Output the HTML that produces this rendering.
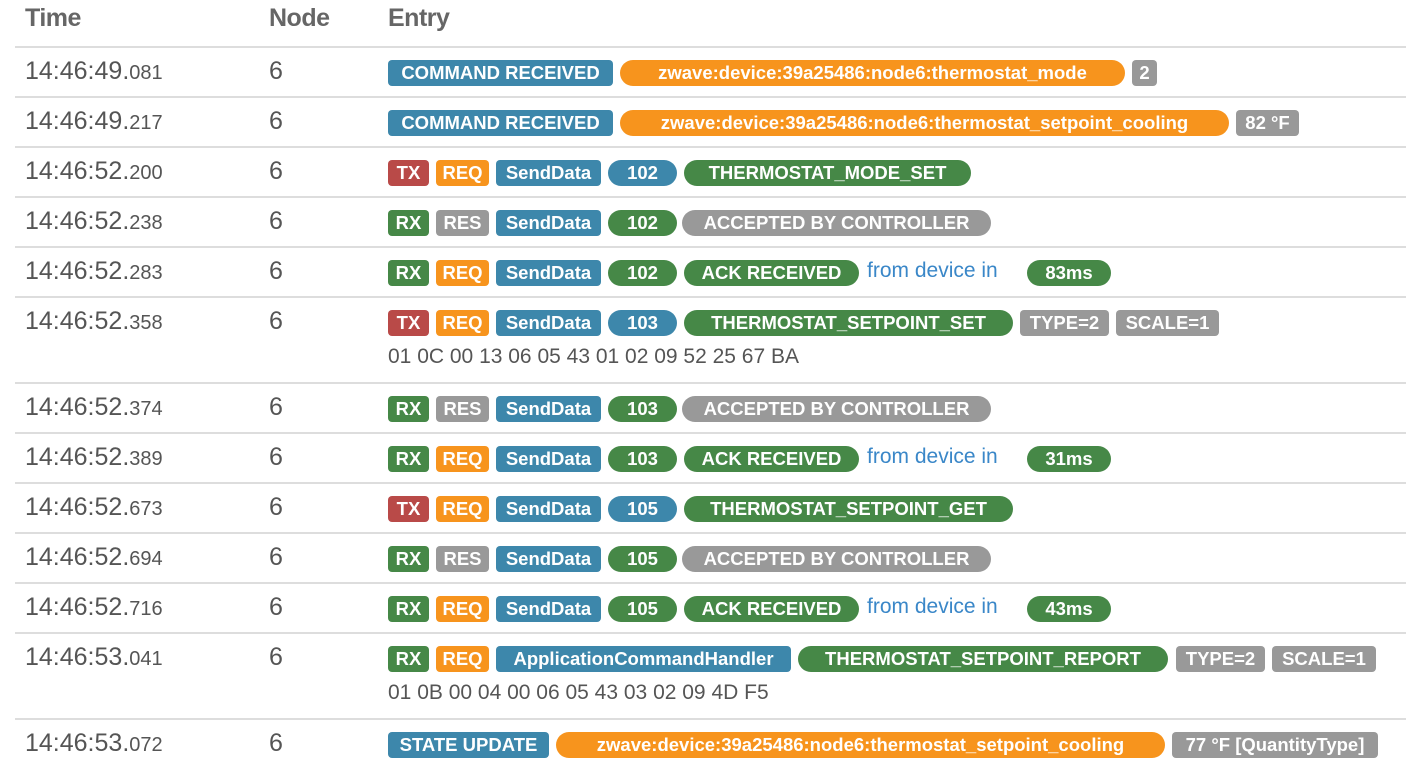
<!DOCTYPE html>
<html><head><meta charset="utf-8"><style>
body{margin:0;background:#fff;width:1406px;height:778px;overflow:hidden;position:relative;font-family:"Liberation Sans",sans-serif;}
.h{position:absolute;top:4px;font:bold 25px "Liberation Sans",sans-serif;color:#666;letter-spacing:-0.5px}
.l{position:absolute;left:15px;right:0;height:2px;background:#ddd;}
.t{position:absolute;left:25px;font-size:25px;color:#555;}
.t small{font-size:20px;}
.n{position:absolute;left:269px;font-size:25px;color:#555;}
.b{position:absolute;height:26px;line-height:26px;text-align:center;color:#fff;font-weight:bold;font-size:18.5px;border-radius:4px;white-space:nowrap;overflow:hidden;}
.p{border-radius:13px;}
.bl{background:#3d87ab}.or{background:#f7941d}.rd{background:#b94a48}.gr{background:#468847}.gy{background:#999}
.f{position:absolute;color:#3a87c8;font-size:21px;}
.x{position:absolute;left:388px;color:#555;font-size:21px;}
</style></head><body>
<div class="h" style="left:25px">Time</div><div class="h" style="left:269px">Node</div><div class="h" style="left:388px">Entry</div>
<div class="l" style="top:46px"></div><div class="l" style="top:96px"></div><div class="l" style="top:146px"></div><div class="l" style="top:196px"></div><div class="l" style="top:246px"></div><div class="l" style="top:296px"></div><div class="l" style="top:382px"></div><div class="l" style="top:432px"></div><div class="l" style="top:482px"></div><div class="l" style="top:532px"></div><div class="l" style="top:582px"></div><div class="l" style="top:632px"></div><div class="l" style="top:718px"></div>

<div class="t" style="top:57px">14:46:49.<small>081</small></div><div class="n" style="top:57px">6</div>
<div class="b bl" style="top:60px;left:388px;width:225px">COMMAND RECEIVED</div>
<div class="b or p" style="top:60px;left:620px;width:505px">zwave:device:39a25486:node6:thermostat_mode</div>
<div class="b gy" style="top:60px;left:1132px;width:25px">2</div>

<div class="t" style="top:107px">14:46:49.<small>217</small></div><div class="n" style="top:107px">6</div>
<div class="b bl" style="top:110px;left:388px;width:225px">COMMAND RECEIVED</div>
<div class="b or p" style="top:110px;left:620px;width:609px">zwave:device:39a25486:node6:thermostat_setpoint_cooling</div>
<div class="b gy" style="top:110px;left:1236px;width:63px">82 °F</div>

<div class="t" style="top:157px">14:46:52.<small>200</small></div><div class="n" style="top:157px">6</div>
<div class="b rd" style="top:160px;left:388px;width:41px">TX</div><div class="b or" style="top:160px;left:436px;width:53px">REQ</div><div class="b bl" style="top:160px;left:496px;width:105px">SendData</div><div class="b bl p" style="top:160px;left:608px;width:69px">102</div>
<div class="b gr p" style="top:160px;left:684px;width:287px">THERMOSTAT_MODE_SET</div>

<div class="t" style="top:207px">14:46:52.<small>238</small></div><div class="n" style="top:207px">6</div>
<div class="b gr" style="top:210px;left:388px;width:41px">RX</div><div class="b gy" style="top:210px;left:436px;width:53px">RES</div><div class="b bl" style="top:210px;left:496px;width:105px">SendData</div><div class="b gr p" style="top:210px;left:608px;width:69px">102</div>
<div class="b gy p" style="top:210px;left:682px;width:309px">ACCEPTED BY CONTROLLER</div>

<div class="t" style="top:257px">14:46:52.<small>283</small></div><div class="n" style="top:257px">6</div>
<div class="b gr" style="top:260px;left:388px;width:41px">RX</div><div class="b or" style="top:260px;left:436px;width:53px">REQ</div><div class="b bl" style="top:260px;left:496px;width:105px">SendData</div><div class="b gr p" style="top:260px;left:608px;width:69px">102</div>
<div class="b gr p" style="top:260px;left:684px;width:175px">ACK RECEIVED</div><div class="f" style="top:259px;left:867px">from device in</div><div class="b gr p" style="top:260px;left:1027px;width:84px">83ms</div>

<div class="t" style="top:307px">14:46:52.<small>358</small></div><div class="n" style="top:307px">6</div>
<div class="b rd" style="top:310px;left:388px;width:41px">TX</div><div class="b or" style="top:310px;left:436px;width:53px">REQ</div><div class="b bl" style="top:310px;left:496px;width:105px">SendData</div><div class="b bl p" style="top:310px;left:608px;width:69px">103</div>
<div class="b gr p" style="top:310px;left:684px;width:329px">THERMOSTAT_SETPOINT_SET</div><div class="b gy" style="top:310px;left:1020px;width:89px">TYPE=2</div><div class="b gy" style="top:310px;left:1116px;width:103px">SCALE=1</div>
<div class="x" style="top:345px">01 0C 00 13 06 05 43 01 02 09 52 25 67 BA</div>

<div class="t" style="top:393px">14:46:52.<small>374</small></div><div class="n" style="top:393px">6</div>
<div class="b gr" style="top:396px;left:388px;width:41px">RX</div><div class="b gy" style="top:396px;left:436px;width:53px">RES</div><div class="b bl" style="top:396px;left:496px;width:105px">SendData</div><div class="b gr p" style="top:396px;left:608px;width:69px">103</div>
<div class="b gy p" style="top:396px;left:682px;width:309px">ACCEPTED BY CONTROLLER</div>

<div class="t" style="top:443px">14:46:52.<small>389</small></div><div class="n" style="top:443px">6</div>
<div class="b gr" style="top:446px;left:388px;width:41px">RX</div><div class="b or" style="top:446px;left:436px;width:53px">REQ</div><div class="b bl" style="top:446px;left:496px;width:105px">SendData</div><div class="b gr p" style="top:446px;left:608px;width:69px">103</div>
<div class="b gr p" style="top:446px;left:684px;width:175px">ACK RECEIVED</div><div class="f" style="top:445px;left:867px">from device in</div><div class="b gr p" style="top:446px;left:1027px;width:84px">31ms</div>

<div class="t" style="top:493px">14:46:52.<small>673</small></div><div class="n" style="top:493px">6</div>
<div class="b rd" style="top:496px;left:388px;width:41px">TX</div><div class="b or" style="top:496px;left:436px;width:53px">REQ</div><div class="b bl" style="top:496px;left:496px;width:105px">SendData</div><div class="b bl p" style="top:496px;left:608px;width:69px">105</div>
<div class="b gr p" style="top:496px;left:684px;width:329px">THERMOSTAT_SETPOINT_GET</div>

<div class="t" style="top:543px">14:46:52.<small>694</small></div><div class="n" style="top:543px">6</div>
<div class="b gr" style="top:546px;left:388px;width:41px">RX</div><div class="b gy" style="top:546px;left:436px;width:53px">RES</div><div class="b bl" style="top:546px;left:496px;width:105px">SendData</div><div class="b gr p" style="top:546px;left:608px;width:69px">105</div>
<div class="b gy p" style="top:546px;left:682px;width:309px">ACCEPTED BY CONTROLLER</div>

<div class="t" style="top:593px">14:46:52.<small>716</small></div><div class="n" style="top:593px">6</div>
<div class="b gr" style="top:596px;left:388px;width:41px">RX</div><div class="b or" style="top:596px;left:436px;width:53px">REQ</div><div class="b bl" style="top:596px;left:496px;width:105px">SendData</div><div class="b gr p" style="top:596px;left:608px;width:69px">105</div>
<div class="b gr p" style="top:596px;left:684px;width:175px">ACK RECEIVED</div><div class="f" style="top:595px;left:867px">from device in</div><div class="b gr p" style="top:596px;left:1027px;width:84px">43ms</div>

<div class="t" style="top:643px">14:46:53.<small>041</small></div><div class="n" style="top:643px">6</div>
<div class="b gr" style="top:646px;left:388px;width:41px">RX</div><div class="b or" style="top:646px;left:436px;width:53px">REQ</div><div class="b bl" style="top:646px;left:496px;width:295px">ApplicationCommandHandler</div>
<div class="b gr p" style="top:646px;left:798px;width:370px">THERMOSTAT_SETPOINT_REPORT</div><div class="b gy" style="top:646px;left:1176px;width:89px">TYPE=2</div><div class="b gy" style="top:646px;left:1272px;width:104px">SCALE=1</div>
<div class="x" style="top:681px">01 0B 00 04 00 06 05 43 03 02 09 4D F5</div>

<div class="t" style="top:729px">14:46:53.<small>072</small></div><div class="n" style="top:729px">6</div>
<div class="b bl" style="top:732px;left:388px;width:161px">STATE UPDATE</div>
<div class="b or p" style="top:732px;left:556px;width:609px">zwave:device:39a25486:node6:thermostat_setpoint_cooling</div>
<div class="b gy" style="top:732px;left:1172px;width:206px">77 °F [QuantityType]</div>
</body></html>
